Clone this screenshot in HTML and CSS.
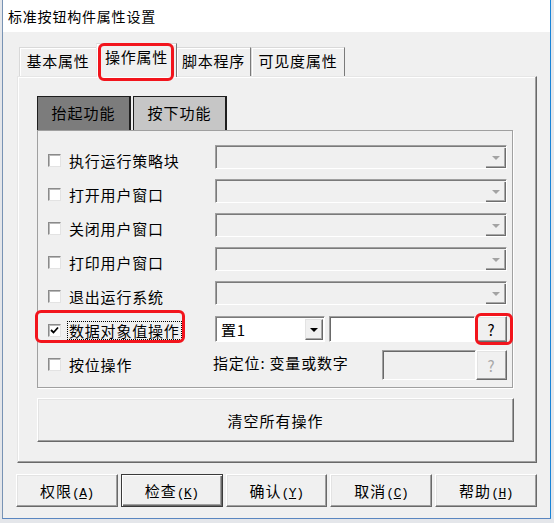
FILE: index.html
```html
<!DOCTYPE html>
<html lang="zh-CN">
<head>
    <meta charset="UTF-8">
    <title>标准按钮构件属性设置</title>
    <link rel="stylesheet" href="styles.css">
</head>
<body>

<div class="window">
    <div class="titlebar">标准按钮构件属性设置</div>

    <div class="client">
        <div class="tabs">
            <div class="tab tab-basic">基本属性</div>
            <div class="tab tab-action active note note-tab">操作属性</div>
            <div class="tab tab-script">脚本程序</div>
            <div class="tab tab-visible">可见度属性</div>
        </div>

        <div class="tab-panel">
            <div class="subtabs">
                <div class="subtab subtab-up">抬起功能</div>
                <div class="subtab subtab-down">按下功能</div>
            </div>

            <div class="sub-panel">
                <div class="row">
                    <div class="cell"><label class="check"><span class="box"></span><span class="text">执行运行策略块</span></label></div>
                    <div class="combo disabled"><span class="drop"></span></div>
                </div>
                <div class="row">
                    <div class="cell"><label class="check"><span class="box"></span><span class="text">打开用户窗口</span></label></div>
                    <div class="combo disabled"><span class="drop"></span></div>
                </div>
                <div class="row">
                    <div class="cell"><label class="check"><span class="box"></span><span class="text">关闭用户窗口</span></label></div>
                    <div class="combo disabled"><span class="drop"></span></div>
                </div>
                <div class="row">
                    <div class="cell"><label class="check"><span class="box"></span><span class="text">打印用户窗口</span></label></div>
                    <div class="combo disabled"><span class="drop"></span></div>
                </div>
                <div class="row">
                    <div class="cell"><label class="check"><span class="box"></span><span class="text">退出运行系统</span></label></div>
                    <div class="combo disabled"><span class="drop"></span></div>
                </div>
                <div class="row">
                    <div class="cell note note-check">
                        <label class="check">
                            <span class="box checked">
                                <svg width="9" height="9" viewBox="0 0 9 9"><polyline points="1,4 3.5,6.5 8,1.5" fill="none" stroke="#000" stroke-width="1.8"/></svg>
                            </span>
                            <span class="text focus">数据对象值操作</span>
                        </label>
                    </div>
                    <div class="controls">
                        <div class="combo active-combo"><span class="value">置1</span><span class="drop dark"></span></div>
                        <div class="field"></div>
                        <button class="btn btn-ask note note-ask">?</button>
                    </div>
                </div>
                <div class="row">
                    <div class="cell"><label class="check"><span class="box"></span><span class="text">按位操作</span></label></div>
                    <div class="controls bits">
                        <span class="hint">指定位: 变量或数字</span>
                        <div class="field field-off"></div>
                        <button class="btn btn-ask off">?</button>
                    </div>
                </div>
            </div>

            <button class="btn btn-clear">清空所有操作</button>
        </div>

        <div class="actions">
            <button class="btn">权限<span class="key">(<u>A</u>)</span></button>
            <button class="btn default">检查<span class="key">(<u>K</u>)</span></button>
            <button class="btn">确认<span class="key">(<u>Y</u>)</span></button>
            <button class="btn">取消<span class="key">(<u>C</u>)</span></button>
            <button class="btn">帮助<span class="key">(<u>H</u>)</span></button>
        </div>
    </div>
</div>

</body>
</html>
```

FILE: styles.css
```css
* {
    box-sizing: border-box;
}
html {
    background: #e4e6ea;
}
body {
    margin: 0;
    font-family: "Noto Sans CJK SC", "Liberation Sans", sans-serif;
    font-size: 15px;
    letter-spacing: 0.8px;
    color: #000;
}
.window {
    width: 549px;
    height: 519px;
    margin-left: 2px;
    background: #f0f0f0;
    border-left: 1px solid #7893b4;
    border-right: 1px solid #1883d7;
    border-bottom: 1px solid #5a86c0;
}
.titlebar {
    height: 32px;
    background: #fff;
    padding-left: 5px;
    font-size: 14px;
    line-height: 33px;
}
.client {
    padding: 11px 13px 0 14px;
}

/* tabs */
.tabs {
    display: flex;
    align-items: flex-end;
    height: 33px;
    padding-left: 2px;
    position: relative;
    z-index: 2;
}
.tab {
    height: 29px;
    text-align: center;
    line-height: 26px;
    background: #f0f0f0;
    border: 1px solid;
    border-bottom: none;
    border-color: #d9d9d9 #7a7a7a transparent #d9d9d9;
    box-shadow: inset 1px 1px #fff;
}
.tab-basic { width: 78px; }
.tab-script { width: 75px; }
.tab-visible { width: 94px; }
.tab.active {
    width: 81px;
    height: 34px;
    margin: 0 -1px -1px -1px;
    border-color: #d9d9d9 #7a7a7a transparent #e9e9e9;
    position: relative;
    z-index: 3;
}

.tab-panel {
    height: 387px;
    border: 1px solid;
    border-color: #e6e6e6 #696969 #696969 #e6e6e6;
    box-shadow: inset -1px -1px #a0a0a0, inset 1px 1px #fff;
    padding: 19px 22px 0 19px;
}

/* inner tabs */
.subtabs {
    display: flex;
    gap: 2px;
    height: 34px;
}
.subtab {
    width: 94px;
    text-align: center;
    line-height: 31px;
    letter-spacing: 1px;
    border: 1px solid #1e1e1e;
    border-right-width: 2px;
    border-bottom: none;
}
.subtab-up {
    background: #7c7c7c;
}
.subtab-down {
    background: #c6c6c6;
}

.sub-panel {
    width: 476px;
    height: 258px;
    border: 1px solid #a0a0a0;
    box-shadow: 1px 1px #fff;
    padding: 14px 5px 0 10px;
}
.row {
    display: grid;
    grid-template-columns: 167px 1fr;
    height: 34px;
}
.cell {
    padding-top: 9px;
}
.check {
    display: flex;
    align-items: center;
    gap: 8px;
    height: 13px;
}
.box {
    width: 13px;
    height: 13px;
    background: #fff;
    border: 1px solid;
    border-color: #8a8a8a #e3e3e3 #e3e3e3 #8a8a8a;
    box-shadow: inset 1px 1px #b9b9b9;
    display: flex;
    align-items: center;
    justify-content: center;
}
.text {
    line-height: 15px;
    white-space: nowrap;
}
.focus {
    border: 1px dotted #000;
    padding: 1px;
    margin-left: -2px;
}

/* combo boxes and fields */
.combo {
    height: 24px;
    display: flex;
    justify-content: space-between;
    border: 1px solid;
    border-color: #a0a0a0 #fff #fff #a0a0a0;
    box-shadow: inset 1px 1px #7a7a7a;
    padding: 2px 0 0 2px;
}
.drop {
    width: 20px;
    margin-left: auto;
    border-right: 1px solid #6e6e6e;
    border-bottom: 1px solid #6e6e6e;
    box-shadow: inset -1px -1px #a8a8a8;
    display: flex;
    align-items: center;
    justify-content: center;
}
.drop::before {
    content: '';
    border-left: 4px solid transparent;
    border-right: 4px solid transparent;
    border-top: 4px solid #a3a3a3;
}
.controls {
    display: flex;
    gap: 4px;
    margin-top: 1px;
    height: 26px;
}
.active-combo {
    width: 110px;
    height: 26px;
    background: #fff;
}
.active-combo .value {
    padding-left: 3px;
    line-height: 21px;
}
.drop.dark {
    width: 18px;
    background: #f0f0f0;
    border: 1px solid;
    border-color: #e3e3e3 #696969 #696969 #e3e3e3;
    margin: 0 1px 1px 0;
}
.drop.dark::before {
    border-top-color: #000;
}
.field {
    width: 146px;
    height: 26px;
    background: #fff;
    border: 1px solid;
    border-color: #a0a0a0 #fff #fff #a0a0a0;
    box-shadow: inset 1px 1px #696969;
}
.btn-ask {
    width: 31px;
    height: 26px;
    margin-left: -3px;
    font-family: "Liberation Sans", sans-serif;
    font-size: 14px;
}
.bits {
    height: 30px;
    gap: 0;
}
.hint {
    margin-left: -2px;
    width: 169px;
    line-height: 26px;
    white-space: nowrap;
}
.field-off {
    width: 94px;
    height: 30px;
    background: #f0f0f0;
}
.btn-ask.off {
    height: 30px;
    margin-left: 0;
    color: #a8a8a8;
}

/* buttons */
.btn {
    font: inherit;
    letter-spacing: 1px;
    color: #000;
    background: #f0f0f0;
    border: 1px solid;
    border-color: #fff #696969 #696969 #fff;
    box-shadow: inset -1px -1px #a0a0a0, inset 1px 1px #e3e3e3;
    padding: 0;
}
.btn-clear {
    display: block;
    width: 477px;
    height: 44px;
    margin-top: 10px;
}
.actions {
    display: flex;
    gap: 3px;
    margin: 11px 0 0 -1px;
}
.actions .btn {
    width: 102px;
    height: 33px;
}
.btn.default {
    border-color: #3a3a3a;
    box-shadow: inset 1px 1px #fff, inset -1px -1px #696969, inset -2px -2px #a0a0a0;
}
.key {
    font-family: "Liberation Mono", monospace;
    font-size: 13px;
    letter-spacing: -0.5px;
}

/* red annotation frames */
.note {
    position: relative;
}
.note::after {
    content: '';
    position: absolute;
    border: 3px solid #f2141c;
    border-radius: 6px;
    pointer-events: none;
}
.note-tab::after {
    left: 1px;
    right: 2px;
    top: -1px;
    bottom: -4px;
}
.note-check::after {
    left: -13px;
    right: 30px;
    top: -5px;
    bottom: 6px;
}
.note-ask::after {
    left: -2px;
    right: -7px;
    top: -4px;
    bottom: -4px;
}
```
